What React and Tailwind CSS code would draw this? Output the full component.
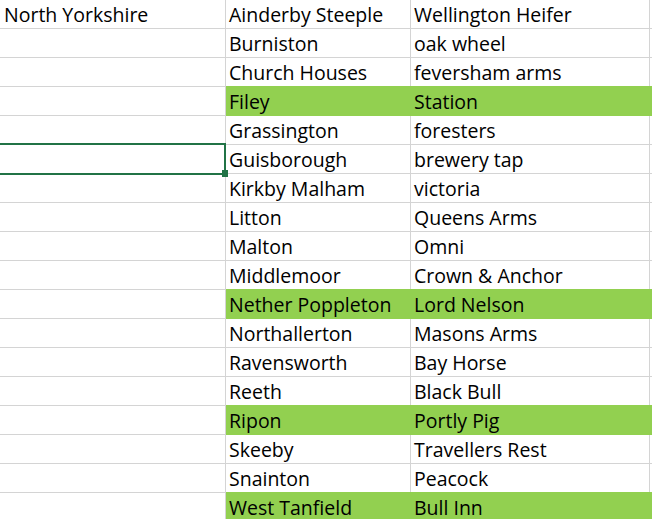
const rows = [
  ["North Yorkshire", "Ainderby Steeple", "Wellington Heifer", false],
  ["", "Burniston", "oak wheel", false],
  ["", "Church Houses", "feversham arms", false],
  ["", "Filey", "Station", true],
  ["", "Grassington", "foresters", false],
  ["", "Guisborough", "brewery tap", false],
  ["", "Kirkby Malham", "victoria", false],
  ["", "Litton", "Queens Arms", false],
  ["", "Malton", "Omni", false],
  ["", "Middlemoor", "Crown & Anchor", false],
  ["", "Nether Poppleton", "Lord Nelson", true],
  ["", "Northallerton", "Masons Arms", false],
  ["", "Ravensworth", "Bay Horse", false],
  ["", "Reeth", "Black Bull", false],
  ["", "Ripon", "Portly Pig", true],
  ["", "Skeeby", "Travellers Rest", false],
  ["", "Snainton", "Peacock", false],
  ["", "West Tanfield", "Bull Inn", true],
];

export default function App() {
  return (
    <div
      className="relative w-[652px] h-[519px] overflow-hidden bg-white text-black"
      style={{ fontFamily: "'Open Sans', 'Noto Sans', sans-serif" }}
    >
      {rows.map(([a, b, c, g], i) => {
        const cellBase = "h-[29px] border-b pl-[3px] pt-[1px] text-[19.5px] leading-[28px] whitespace-nowrap";
        const green = "bg-[#92d050] border-[#92d050] shadow-[0_-1px_0_#92d050]";
        const plain = "bg-white border-[#d4d4d4]";
        return (
          <div key={i} className="flex">
            <div className={`relative w-[226px] shrink-0 border-r pl-[4px] ${cellBase} ${plain} ${i === 5 ? "z-10" : ""}`}>
              {a}
              {i === 5 && (
                <div className="absolute left-[-2px] top-[-2px] right-[-1px] bottom-[-2px] border-2 border-[#217346]">
                  <div className="absolute right-[-4px] bottom-[-4px] w-[6px] h-[7px] bg-[#217346]" />
                </div>
              )}
            </div>
            <div className={`w-[185px] shrink-0 border-r overflow-hidden ${cellBase} ${g ? green : plain}`}>{b}</div>
            <div className={`w-[239px] shrink-0 border-r overflow-hidden ${cellBase} ${g ? green : plain}`}>{c}</div>
            <div className={`flex-1 ${cellBase} ${g ? green : plain}`}></div>
          </div>
        );
      })}
    </div>
  );
}
